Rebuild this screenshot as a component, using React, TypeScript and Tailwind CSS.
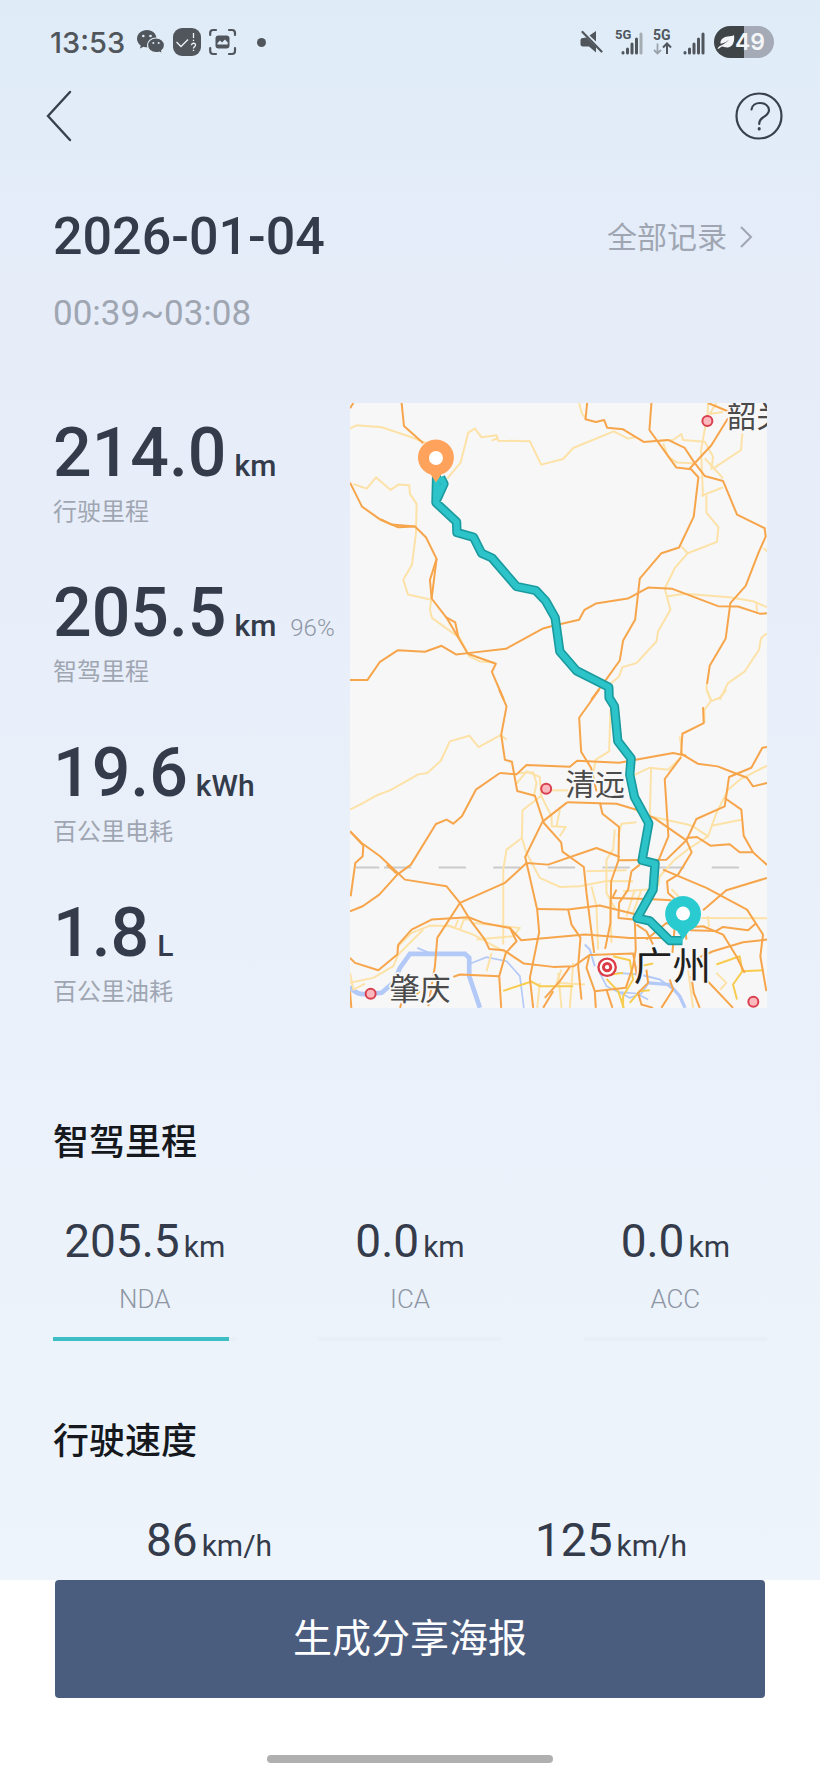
import React from 'react';

const metrics = [
  { value: '214.0', unit: 'km', label: '行驶里程' },
  { value: '205.5', unit: 'km', label: '智驾里程', note: '96%' },
  { value: '19.6', unit: 'kWh', label: '百公里电耗' },
  { value: '1.8', unit: 'L', label: '百公里油耗' },
];

const assists = [
  { name: 'NDA', value: '205.5', percent: 96 },
  { name: 'ICA', value: '0.0', percent: 0 },
  { name: 'ACC', value: '0.0', percent: 0 },
];

const speeds = [{ value: '86' }, { value: '125' }];

// Upper half of the map
const minorRoadsNorth = [
  'M30 115 L50 106 L125 112 L215 142 L260 160',
  'M322 266 L362 218 L385 128 L405 116 L425 142 L470 136 L475 152 L570 154 L604 224 L670 207 L700 174 L822 124 L865 146 L885 142',
  'M455 152 L475 144',
  'M718 39 L726 70 L740 88',
  'M40 282 L80 296 L108 262 L152 300 L175 284 L208 286 L210 312 L230 342 L228 430 L216 525 L190 570 L204 614 L274 630 L270 660 L276 684 L360 745 L388 800 L420 815 L465 818',
  'M1105 39 L1104 70 L1084 180 L1090 320',
  'M1130 39 L1110 72 L1150 66',
  'M960 152 L1000 150 L1025 132 L1030 150 L1095 155 L1120 200 L1115 240',
  'M970 160 L985 200 L1012 218 L1060 220',
  'M1095 205 L1150 265',
  'M1208 130 L1204 180 L1120 236',
  'M1085 318 L1150 292',
  'M1100 316 L1100 368 L1136 412 L1132 456 L1044 490 L1005 535 L975 596 L992 660 L955 724 L950 755 L890 820 L848 832 L838 860 L808 885',
  'M1025 470 L1044 490',
  'M980 620 L1035 612 L1170 622 L1240 634 L1282 652',
  'M1250 640 L1252 665',
  'M1282 730 L1264 745 L1258 780 L1215 845 L1165 880 L1140 930',
  'M1272 475 L1282 484',
  'M1102 880 L1100 895 L1112 930',
];
const majorRoadsNorth = [
  'M185 39 L192 108 L250 160',
  'M30 55 L40 39',
  'M742 39 L737 88 L768 96 L793 90 L802 113 L850 118 L912 156 L985 150 L1035 174 L1062 215 L1095 258 L1150 273 L1192 374 L1275 415 L1278 440 L1256 490 L1218 588 L1172 640 L1158 746 L1110 828 L1102 882',
  'M935 39 L929 120 L1010 233 L1054 238 L1076 262 L1062 380 L1018 473 L965 490 L900 566 L886 690 L850 752 L840 812 L800 868 L754 930',
  'M1048 238 L1115 166 L1165 85',
  'M1105 39 L1170 66',
  'M30 278 L66 350 L122 390 L175 412 L225 410',
  'M122 388 L155 404 L225 410 L258 442 L290 507 L270 570 L275 626 L320 684 L384 792',
  'M30 871 L82 871 L120 816 L174 781 L255 786 L305 768 L348 794 L384 790 L498 777 L610 716 L640 708 L718 690 L734 660 L768 641 L864 626 L925 593 L998 597 L1135 649 L1195 650 L1262 672 L1282 670',
  'M290 507 L275 626',
  'M318 682 L346 698 L356 745',
  'M384 792 L468 822 L456 846 L492 930',
];

// Lower half of the map
const minorRoadsSouth = [
  'M30 360 L60 345 L112 316 L150 302 L235 254 L262 250 L302 214 L330 155 L388 138 L416 172 L482 136 L500 150',
  'M812 60 L808 185 L768 210 L760 250',
  'M1100 0 L1115 32 L1094 60 L1094 100',
  'M1160 0 L1140 24 L1115 34',
  'M1020 140 L1028 190 L1022 205 L985 240 L930 234 L870 262',
  'M934 238 L930 380 L890 365',
  'M1282 228 L1200 270 L1165 300 L1150 330 L1130 370 L1105 440 L1060 410 L1040 404 L930 380',
  'M1115 408 L1205 390',
  'M1105 440 L1050 475 L1005 510 L960 560 L955 590',
  'M530 282 L560 245 L600 262 L604 318 L548 362 L546 445 L500 480 L490 540 L490 765',
  'M536 250 L580 248 L590 280 L582 320',
  'M604 302 L690 302',
  'M604 318 L635 380 L636 410 L678 412 L660 440',
  'M660 360 L650 410',
  'M546 445 L560 490 L600 565 L660 592 L720 590 L800 574 L880 575',
  'M740 545 L860 542',
  'M825 420 L820 480 L800 510 L800 610 L828 660',
  'M890 398 L845 402 L835 440',
  'M755 590 L770 650 L775 780',
  'M810 620 L815 760',
  'M850 605 L925 600',
  'M885 600 L860 680',
  'M905 600 L880 670',
  'M995 598 L1030 635',
  'M1085 685 L1282 686',
  'M1105 680 L1108 712',
  'M170 775 L215 730 L270 708 L330 710 L400 735 L500 790',
  'M320 705 L345 715 L355 690',
  'M360 720 L372 690 L386 690',
  'M30 880 L100 865 L160 830 L175 795 L250 720',
  'M410 750 L520 740 L540 715 L400 700',
  'M455 790 L440 845',
  'M655 850 L665 955',
  'M665 840 L650 880 L735 885',
  'M700 820 L690 955',
  'M30 850 L40 900 L75 882',
  'M1130 850 L1160 880 L1142 900',
  'M600 880 L592 955',
  'M1045 840 L1060 955',
];
const majorRoadsSouth = [
  'M478 0 L500 50 L484 135 L495 210 L516 216 L532 304 L585 318 L612 400 L664 458 L668 486 L732 532 L740 610 L763 790',
  'M778 0 L718 84 L724 186 L754 235 L770 305',
  'M1090 52 L1092 100 L1028 132 L1024 192 L1074 222 L1134 230 L1185 250 L1222 264 L1240 290 L1282 280',
  'M1282 172 L1268 174 L1235 234 L1168 262 L1155 350 L1070 388 L1040 452 L1056 488 L1015 555 L982 575 L985 610 L1030 650 L1040 750',
  'M480 250 L530 254 L560 226 L690 231 L712 213 L838 219 L1000 190 L1040 198',
  'M480 250 L408 300 L366 380 L340 402 L320 390 L288 403 L213 525 L172 555 L118 615 L68 650 L30 665',
  'M30 425 L65 460 L120 500 L195 570 L320 590 L360 640 L390 690 L435 750 L448 778 L492 782 L552 822 L640 832 L702 830 L750 796 L880 792 L895 880',
  'M30 425 L70 468 L68 500 L46 520 L32 620',
  'M140 525 L170 552',
  'M360 640 L495 580 L560 520 L625 525 L770 475 L840 502',
  'M360 640 L292 745 L285 830 L265 950',
  'M1024 202 L975 268 L986 440 L955 515',
  'M682 338 L830 342 L890 360 L945 386 L1040 452 L980 510 L850 512 L836 512 L838 412 L788 372 L780 338',
  'M682 338 L608 396 L556 502 L592 660 L598 728 L570 865 L580 955',
  'M1040 445 L1072 442 L1112 468 L1170 464 L1200 488 L1240 488 L1282 526',
  'M1155 325 L1205 360 L1212 438 L1240 488',
  'M836 512 L814 575 L812 700 L796 778',
  'M875 545 L865 600 L838 640 L836 685 L880 690',
  'M900 525 L875 545',
  'M970 540 L1100 595 L1222 660 L1270 735 L1262 800 L1280 905',
  'M1282 565 L1160 602 L1090 662',
  'M592 658 L685 660 L780 648 L890 675',
  'M815 625 L925 628 L995 632',
  'M830 600 L818 625',
  'M685 660 L695 705 L722 744 L715 830 L725 930',
  'M30 805 L45 820 L115 842 L172 795 L175 765 L215 720 L275 690 L386 683 L430 700 L510 715 L544 752 L736 735 L870 745 L985 745',
  'M510 715 L530 755 L498 790 L478 860 L484 955',
  'M885 690 L888 780 L880 830',
  'M890 705 L920 725 L940 765',
  'M920 750 L980 700 L1005 710 L998 790',
  'M1050 722 L1130 724 L1150 712 L1225 722 L1250 700',
  'M1060 712 L1090 710 L1150 735 L1190 800 L1215 850',
  'M1075 805 L1120 785 L1210 758 L1282 750',
  'M340 862 L360 855 L478 860',
  'M30 905 L34 955',
  'M240 905 L210 930',
  'M185 940 L180 955',
  'M640 905 L610 955',
  'M690 832 L660 875 L615 925',
  'M748 800 L740 835 L765 905 L858 895 L880 830',
  'M765 905 L768 955',
  'M800 900 L818 955',
  'M920 840 L925 880 L895 910 L905 945 L940 955',
  'M990 870 L1000 900 L965 955',
  'M1055 860 L1062 910 L1080 955',
  'M1090 860 L1180 955',
];
const streets = [
  'M490 904 L575 876 L600 890 L700 890',
  'M1130 825 L1200 800 L1208 845 L1272 842',
  'M1208 845 L1180 885 L1192 930',
  'M820 800 L870 812 L880 870 L850 920 L850 955',
  'M815 855 L850 850',
  'M940 822 L890 832',
  'M870 940 L900 905 L930 902',
  'M800 868 L835 905 L852 955',
  'M900 790 L905 830',
];

function Roads({ paths, color }: { paths: string[]; color: string }) {
  return (
    <g fill="none" stroke={color} strokeWidth="6" strokeLinejoin="round">
      {paths.map((d) => (
        <path key={d} d={d} />
      ))}
    </g>
  );
}

function CityDot({ x, y }: { x: number; y: number }) {
  return <circle cx={x} cy={y} r="15" fill="#fcb9bd" stroke="#d8404f" strokeWidth="6" />;
}

function RouteMap() {
  const route =
    'M302 262 L312 282 L292 326 L290 262 L288 338 L350 396 L351 428 L401 442 L425 490 L456 504 L530 590 L588 602 L618 634 L646 684 L660 785 L710 843 L807 892 L808 924 L824 950 L834 1054 L874 1106 L870 1155 L884 1222 L927 1301 L907 1412 L946 1422 L940 1500 L892 1586 L930 1594 L990 1653 L1028 1653';

  return (
    <svg
      viewBox="30 39 1252 1816"
      className="block w-full bg-[#f7f7f7] font-['Noto_Sans_CJK_SC',sans-serif]"
      role="img"
      aria-label="行驶路线"
    >
      <Roads paths={minorRoadsNorth} color="#fde2a8" />
      <Roads paths={majorRoadsNorth} color="#f7a54b" />
      <g transform="translate(0 900)">
        <g fill="none" stroke="#b3c9f7">
          <path d="M30 890 Q45 915 75 914 L125 910 L160 880 L180 835 L210 793 L375 793 L388 805 L388 860 L420 955" strokeWidth="14" />
          <path d="M392 822 L440 803 L500 815 L540 860 L552 955" strokeWidth="5" />
          <path d="M232 775 L275 793" strokeWidth="5" />
          <path d="M735 765 L750 780 L765 830 M830 850 L900 855 L960 870 L1000 900" strokeWidth="6" />
          <path d="M925 880 L990 885 L1020 920 L1036 955" strokeWidth="10" />
          <path d="M780 850 L800 890 L870 925 L905 912 L930 875 M840 908 L890 912 L925 930" strokeWidth="5" />
        </g>
        <path
          d="M48 534 H118 M132 534 H214 M296 534 H378 M460 534 H542 M624 534 H706 M788 534 H870 M952 534 H1034 M1116 534 H1198"
          stroke="#cbcbcb"
          strokeWidth="6"
        />
        <Roads paths={minorRoadsSouth} color="#fde2a8" />
        <Roads paths={streets} color="#f8cc4e" />
        <Roads paths={majorRoadsSouth} color="#f7a54b" />
      </g>

      <g fill="none" strokeLinejoin="round">
        <path d={route} stroke="#1a9ba0" strokeWidth="28" />
        <path d={route} stroke="#2dc4c9" strokeWidth="18" />
      </g>

      <CityDot x={1103} y={93} />
      <CityDot x={619} y={1197} />
      <CityDot x={92} y={1813} />
      <CityDot x={1241} y={1837} />
      <circle cx="802" cy="1733" r="26" fill="#ffffff" stroke="#dc3c46" strokeWidth="7" />
      <circle cx="802" cy="1733" r="11" fill="none" stroke="#dc3c46" strokeWidth="9" />

      <g stroke="#f7f7f7" strokeWidth="10" strokeLinejoin="round" paintOrder="stroke">
        <text x="1162" y="112" fontSize="88" fill="#4a4a4a">韶关</text>
        <text x="676" y="1217" fontSize="90" fill="#4a4a4a">清远</text>
        <text x="148" y="1830" fontSize="92" fill="#4a4a4a">肇庆</text>
        <text x="882" y="1772" fontSize="116" fill="#1f1f1f">广州</text>
      </g>

      <path d="M288 278 L272 254 A54 54 0 1 1 304 254 Z" fill="#ffa35c" />
      <circle cx="288" cy="204" r="21" fill="#ffffff" />
      <path d="M1030 1650 L1012 1624 A54 54 0 1 1 1048 1624 Z" fill="#2acbd0" />
      <circle cx="1030" cy="1572" r="21" fill="#ffffff" />
    </svg>
  );
}

function SignalBars({ faded }: { faded?: boolean }) {
  return (
    <g stroke="#50565c" strokeWidth="3" strokeLinecap="round">
      <path d="M2 21 V20.500" />
      <path d="M6.500 21 V17" />
      <path d="M11 21 V12" />
      <path d="M15.500 21 V7" />
      <path d="M20 21 V2" stroke={faded ? '#a4abb2' : '#50565c'} />
    </g>
  );
}

function StatusBar() {
  return (
    <div className="flex h-[84px] items-center justify-between pl-[50px] pr-[46px] text-[#50565c]">
      <div className="flex items-center">
        <span className="font-[Inter,sans-serif] text-[29px] font-medium leading-none">13:53</span>
        <svg width="28" height="26" viewBox="0 0 28 26" className="ml-3" aria-hidden="true">
          <path d="M10 1 C4.500 1 0 4.800 0 9.800 C0 12.600 1.500 15 3.700 16.600 L3 19.500 L6.500 17.800 C7.600 18.200 8.800 18.300 10 18.300 C15.500 18.300 19.500 14.600 19.500 9.700 C19.500 4.800 15.500 1 10 1 Z" fill="currentColor" />
          <path d="M19 9 C23.800 9 27.500 12.300 27.500 16.300 C27.500 18.500 26.400 20.500 24.700 21.800 L25.200 24.600 L22 23.200 C21.100 23.500 20 23.600 19 23.600 C14.200 23.600 10.500 20.300 10.500 16.300 C10.500 12.300 14.200 9 19 9 Z" fill="currentColor" stroke="#e0edf8" strokeWidth="1.200" />
          <g fill="#e0edf8">
            <circle cx="6.300" cy="7" r="1.300" />
            <circle cx="13.500" cy="7" r="1.300" />
            <circle cx="16.300" cy="14" r="1" />
            <circle cx="21.700" cy="14" r="1" />
          </g>
        </svg>
        <svg width="28" height="28" viewBox="0 0 28 28" className="ml-2" aria-hidden="true">
          <rect width="28" height="28" rx="9" fill="currentColor" />
          <g fill="none" stroke="#eef4fa" strokeWidth="1.300">
            <path d="M3.500 14 L8 18.500 L15 11.500" />
            <path d="M20.500 5 V10 M20.500 11.800 V13" />
            <path d="M18.500 17.300 C18.500 14.500 22.700 14.700 22.500 17.200 C22.400 18.800 20.500 18.800 20.500 20.500 M20.500 21.800 V23" />
          </g>
        </svg>
        <svg width="28" height="28" viewBox="0 0 28 28" className="ml-2" aria-hidden="true">
          <path d="M1.200 7 V5 Q1.200 2 4.200 2 H7 M20 2 H23 Q26 2 26 5 V7 M26 20 V23 Q26 26 23 26 H20 M7 26 H4.200 Q1.200 26 1.200 23 V20" fill="none" stroke="currentColor" strokeWidth="2.200" strokeLinecap="round" />
          <rect x="6.500" y="7.500" width="14" height="13" rx="3" fill="currentColor" />
          <path d="M8.500 16.500 V15 L11 12.500 L13 14.500 L16 11.500 L18.700 14.500 V16.500 Z" fill="#e0edf8" />
        </svg>
        <span className="ml-5 size-[9px] rounded-full bg-[#50565c]" />
      </div>

      <div className="flex items-center">
        <svg width="23" height="24" viewBox="0 0 23 24" aria-hidden="true">
          <path d="M0.500 10 Q0.500 8 3 8 L6.500 7.500 L16 17 V22.500 L9 16.500 H3 Q0.500 16.500 0.500 14 Z M9.500 5.500 L16 1 V11.500 Z" fill="currentColor" />
          <path d="M2.500 2 L21.500 21.500" stroke="currentColor" strokeWidth="2.200" strokeLinecap="round" />
        </svg>
        <svg width="30" height="32" viewBox="0 -2 30 32" className="ml-3" aria-label="5G">
          <text x="0" y="11" fontSize="13" fontWeight="700" fill="currentColor" className="font-[Roboto,sans-serif]">5G</text>
          <g transform="translate(6 4)">
            <SignalBars faded />
          </g>
        </svg>
        <svg width="20" height="32" viewBox="0 -2 20 32" className="ml-2" aria-label="5G">
          <text x="0" y="12" fontSize="14" fontWeight="700" fill="currentColor" className="font-[Roboto,sans-serif]">5G</text>
          <path d="M4.500 15.500 V25.500 M1 22 L4.500 25.500 L8 22" fill="none" stroke="#9aa2aa" strokeWidth="1.800" />
          <path d="M14 26 V16 M10 19.500 L14 15.500 L18 19.500" fill="none" stroke="currentColor" strokeWidth="2" />
        </svg>
        <svg width="23" height="28" viewBox="0 0 23 28" className="ml-2.5" aria-hidden="true">
          <g transform="translate(0 4)">
            <SignalBars />
          </g>
        </svg>
        <span className="ml-2 flex h-8 w-[60px] items-center rounded-full bg-linear-to-r from-[#3f4547] from-50% to-[#a4abb7] to-50% pl-[3px] text-[#f3f5f7]">
          <svg width="18" height="16" viewBox="0 0 18 16" aria-hidden="true">
            <path d="M17 1 C18 8 15.500 13 11 13.500 C8 13.700 6.500 12.500 5.500 12.500 C4 12.500 3 14.500 0.500 15 C1 12.500 3.500 11.800 5.500 10.800 C8.500 9.300 10.500 7.500 12 5.500 C9.500 8 6.500 9.300 3.500 9.800 C3 5.500 6.500 3 10.500 2.500 C13.500 2.200 15.500 2.300 17 1 Z" fill="currentColor" />
          </svg>
          <span className="font-[Inter,sans-serif] text-[23px] font-semibold leading-none">49</span>
        </span>
      </div>
    </div>
  );
}

function Stat({ value, unit }: { value: string; unit: string }) {
  return (
    <p className="flex items-baseline justify-center gap-1 text-[#343b4b]">
      <span className="text-[46px] leading-[48px]">{value}</span>
      <span className="text-[30px] leading-none">{unit}</span>
    </p>
  );
}

export default function App() {
  return (
    <div className="flex min-h-screen flex-col bg-white font-[Roboto,'Noto_Sans_CJK_SC',sans-serif]">
      <div className="grow bg-linear-to-b from-[#dfecf8] via-[#e6edf9] via-20% to-[#edf4fb]">
        <StatusBar />

        <header className="flex h-16 items-center justify-between pl-[46px] pr-[37px]">
          <button type="button" aria-label="返回" className="text-[#39414c]">
            <svg width="26" height="52" viewBox="0 0 26 52" fill="none" stroke="currentColor" strokeWidth="2.400" strokeLinecap="round">
              <path d="M24 2 L2 26 L24 50" />
            </svg>
          </button>
          <button type="button" aria-label="帮助" className="text-[#39414c]">
            <svg width="48" height="48" viewBox="0 0 48 48" fill="none" stroke="currentColor" strokeWidth="2.200" strokeLinecap="round">
              <circle cx="24" cy="24" r="22.500" />
              <path d="M16.500 17.500 C17 13 21 11 25 11 C30 11 34 14 34 18 C34 22 31 23.500 28 25.500 C25.500 27.200 24.200 28.500 24.200 32" />
              <path d="M24.200 36.500 V37" strokeWidth="3" />
            </svg>
          </button>
        </header>

        <main className="px-[53px] pb-4 pt-14">
          <div className="flex items-center justify-between">
            <h1 className="text-[52px] font-medium leading-[66px] text-[#343b4b]">2026-01-04</h1>
            <a href="#records" className="flex items-center gap-3 pr-3.5 text-[30px] text-[#9fa6b2]">
              全部记录
              <svg width="14" height="24" viewBox="0 0 14 24" fill="none" stroke="currentColor" strokeWidth="2">
                <path d="M2 2 L12 12 L2 22" />
              </svg>
            </a>
          </div>
          <p className="mt-6 text-[35px] leading-10 text-[#9fa6b2]">00:39~03:08</p>

          <section className="mt-[69px] grid grid-cols-[297fr_417fr]">
            <ul className="flex flex-col gap-12 pt-[13px]">
              {metrics.map((item) => (
                <li key={item.label}>
                  <p className="flex items-baseline whitespace-nowrap text-[#343b4b]">
                    <span className="text-[68px] font-medium leading-[74px]">{item.value}</span>
                    <span className="ml-2 text-[30px] font-medium leading-10">{item.unit}</span>
                    {item.note && <span className="ml-3.5 text-[24px] font-light text-[#8e96a4]">{item.note}</span>}
                  </p>
                  <p className="mt-1.5 text-[24px] leading-8 text-[#9fa6b2]">{item.label}</p>
                </li>
              ))}
            </ul>
            <RouteMap />
          </section>

          <section className="mt-[109px]">
            <h2 className="text-[36px] font-medium leading-[52px] text-[#15181d]">智驾里程</h2>
            <div className="mt-12 grid grid-cols-3 gap-[82px] text-center">
              {assists.map((item) => (
                <div key={item.name}>
                  <Stat value={item.value} unit="km" />
                  <p className="mt-4 text-[26px] font-light leading-9 text-[#8e96a4]">{item.name}</p>
                  <div className="mt-5 h-1 bg-[#e8eff9]">
                    <div className="h-full bg-[#3dbec5]" style={{ width: `${item.percent}%` }} />
                  </div>
                </div>
              ))}
            </div>
          </section>

          <section className="mt-[75px]">
            <h2 className="text-[36px] font-medium leading-[52px] text-[#15181d]">行驶速度</h2>
            <div className="mt-12 grid grid-cols-2 gap-[90px]">
              {speeds.map((item) => (
                <Stat key={item.value} value={item.value} unit="km/h" />
              ))}
            </div>
          </section>
        </main>
      </div>

      <footer className="flex flex-col items-center px-[55px] pb-[13px]">
        <button type="button" className="h-[118px] w-full rounded bg-[#4b5d7f] text-[39px] text-white">
          生成分享海报
        </button>
        <div className="mt-[57px] h-2 w-[286px] rounded-full bg-[#b0b0b0]" />
      </footer>
    </div>
  );
}
